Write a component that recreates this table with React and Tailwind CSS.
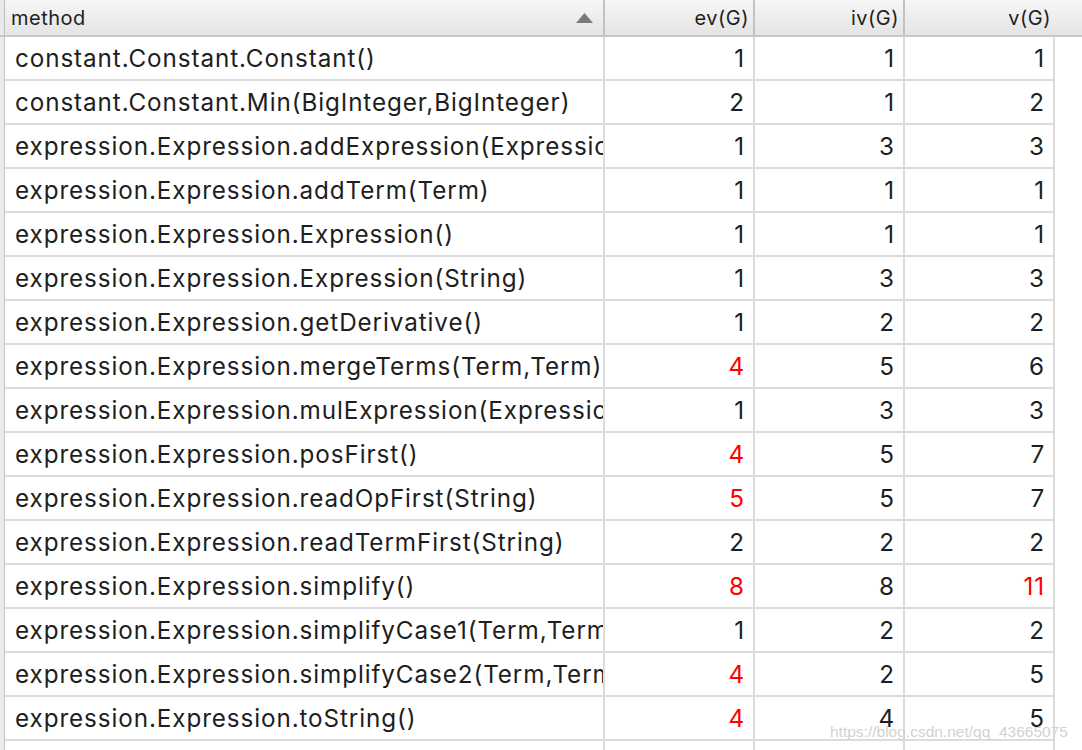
import React from "react";

const rows = [
  ["constant.Constant.Constant()", 1, 1, 1],
  ["constant.Constant.Min(BigInteger,BigInteger)", 2, 1, 2],
  ["expression.Expression.addExpression(Expression)", 1, 3, 3],
  ["expression.Expression.addTerm(Term)", 1, 1, 1],
  ["expression.Expression.Expression()", 1, 1, 1],
  ["expression.Expression.Expression(String)", 1, 3, 3],
  ["expression.Expression.getDerivative()", 1, 2, 2],
  ["expression.Expression.mergeTerms(Term,Term)", 4, 5, 6],
  ["expression.Expression.mulExpression(Expression)", 1, 3, 3],
  ["expression.Expression.posFirst()", 4, 5, 7],
  ["expression.Expression.readOpFirst(String)", 5, 5, 7],
  ["expression.Expression.readTermFirst(String)", 2, 2, 2],
  ["expression.Expression.simplify()", 8, 8, 11],
  ["expression.Expression.simplifyCase1(Term,Term)", 1, 2, 2],
  ["expression.Expression.simplifyCase2(Term,Term)", 4, 2, 5],
  ["expression.Expression.toString()", 4, 4, 5],
  ["", "", "", ""],
];

//Thresholds for red numbers;
const limits = [3, 10, 10];

function NumCell({ value, limit }) {
  const red = value !== "" && value > limit;
  return (
    <div
      className={`w-[150px] shrink-0 border-r-2 border-[#dcdcdc] flex items-center justify-end pr-[8px] pt-[2px] ${
        red ? "text-[#ff0000]" : "text-[#1e1e1e]"
      }`}>
      {value}
    </div>
  );
}

export default function App() {
  return (
    <div
      className="relative w-[1082px] h-[750px] overflow-hidden bg-white text-[#1e1e1e]"
      style={{ fontFamily: "Inter, 'Liberation Sans', sans-serif" }}>
      {/* header */}
      <div className="flex flex-row h-[37px] border-b-2 border-[#c6c6c6] bg-gradient-to-b from-[#f7f7f7] to-[#e4e4e4] text-[20px] tracking-[0.5px]">
        <div className="w-[5px] shrink-0 bg-[#e9e9e9] border-r border-[#bdbdbd]"></div>
        <div className="w-[600px] shrink-0 border-r-2 border-[#c2c2c2] flex items-center pl-[6px] pr-[10px] justify-between">
          <span>method</span>
          <svg width="17" height="10" viewBox="0 0 17 10">
            <polygon points="0,10 8.5,0 17,10" fill="#7a7a7a" />
          </svg>
        </div>
        <div className="w-[150px] shrink-0 border-r-2 border-[#c2c2c2] flex items-center justify-end pr-[4px]">
          ev(G)
        </div>
        <div className="w-[150px] shrink-0 border-r-2 border-[#c2c2c2] flex items-center justify-end pr-[4px]">
          iv(G)
        </div>
        <div className="w-[150px] shrink-0 flex items-center justify-end pr-[4px]">
          v(G)
        </div>
        <div className="flex-1"></div>
      </div>

      {/* body */}
      <div className="flex flex-col text-[24.25px] tracking-[0.9px]">
        {rows.map((r, i) => (
          <div key={i} className="flex flex-row h-[44px] shrink-0">
            <div className="w-[5px] shrink-0 bg-[#ebebeb] border-r border-[#c4c4c4]"></div>
            <div className="flex flex-row border-b-2 border-[#dcdcdc]">
              <div className="w-[600px] shrink-0 border-r-2 border-[#dcdcdc] flex items-center pl-[10px] pt-[2px] overflow-hidden whitespace-nowrap">
                {r[0]}
              </div>
              <NumCell value={r[1]} limit={limits[0]} />
              <NumCell value={r[2]} limit={limits[1]} />
              <NumCell value={r[3]} limit={limits[2]} />
            </div>
          </div>
        ))}
      </div>

      {/* watermark */}
      <div
        className="absolute left-[830px] top-[720px] text-[15.5px] text-[#d2d2d2] whitespace-nowrap"
        style={{ fontFamily: "'Liberation Sans', sans-serif" }}>
        https://blog.csdn.net/qq_43665075
      </div>
    </div>
  );
}
